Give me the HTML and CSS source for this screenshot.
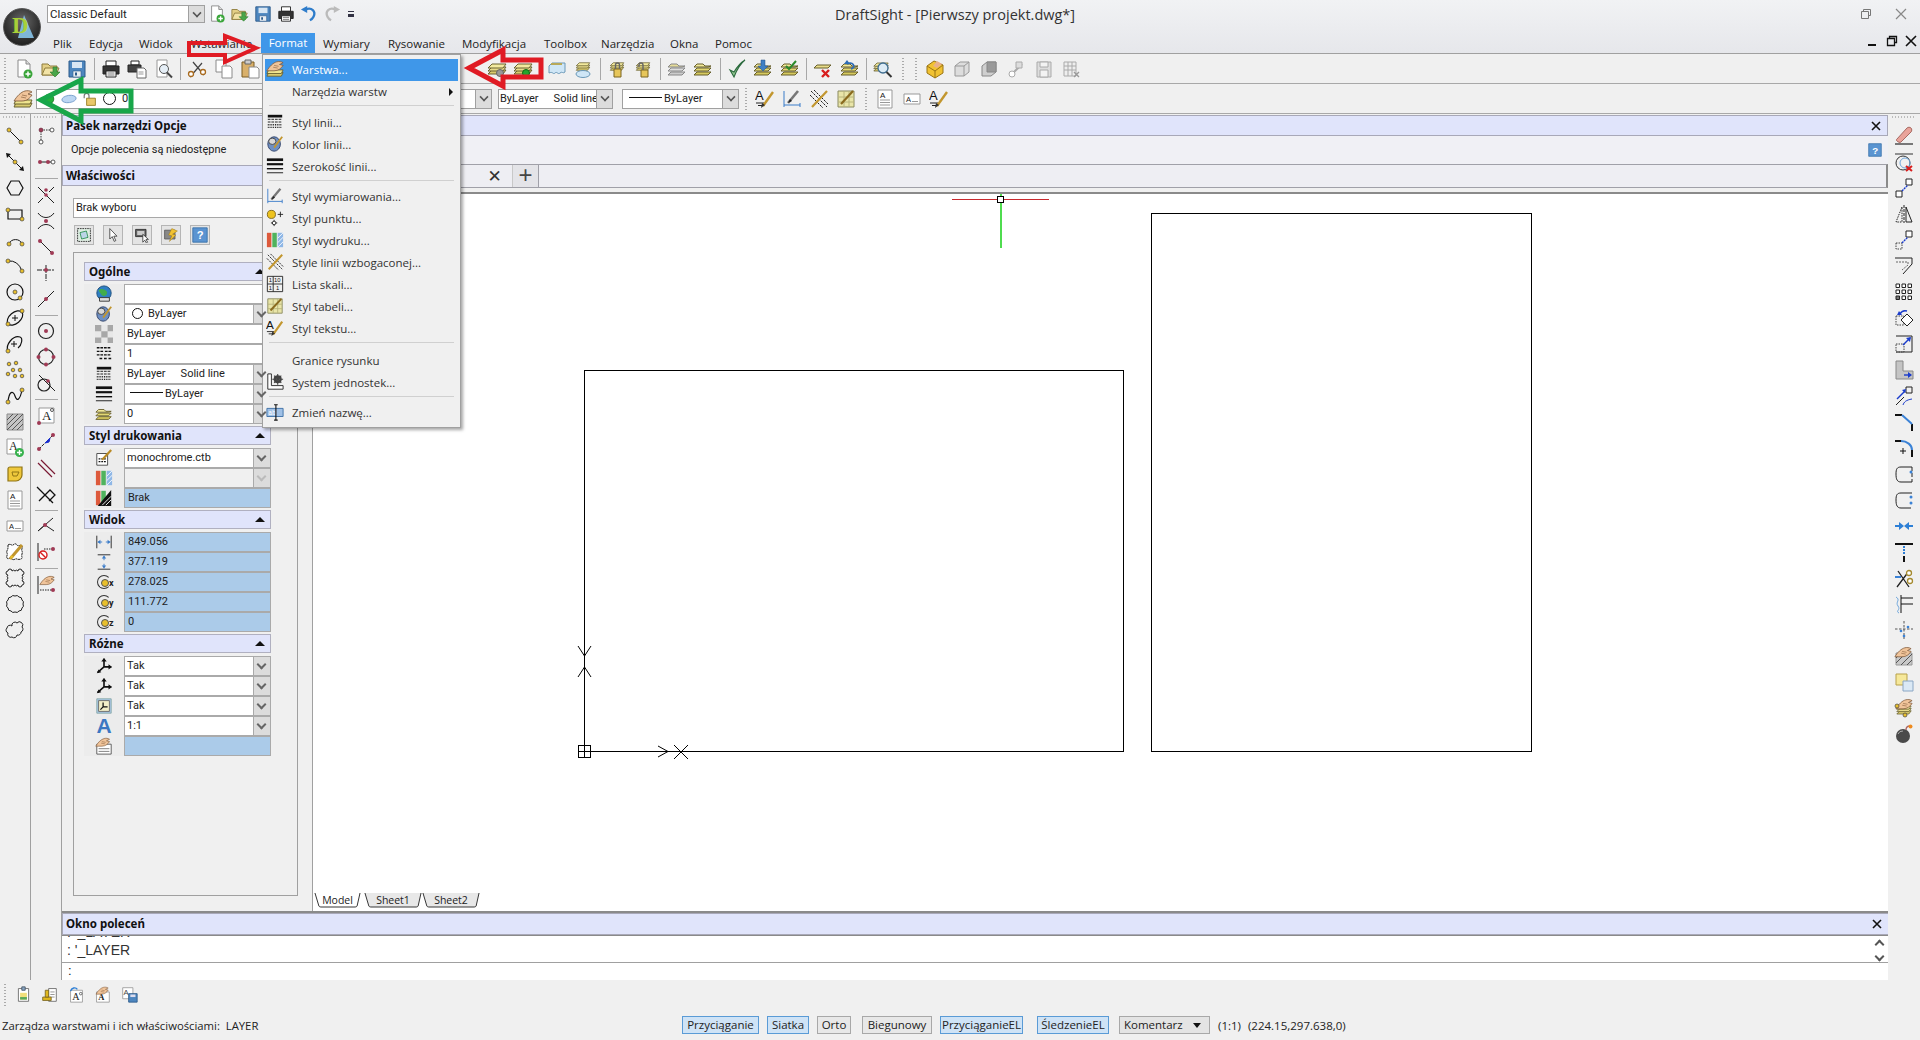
FILE: index.html
```html
<!DOCTYPE html>
<html lang="pl">
<head>
    <meta charset="UTF-8">
    <title>DraftSight - [Pierwszy projekt.dwg*]</title>
    <link rel="stylesheet" href="styles.css">
</head>
<body>
<svg class="defs" width="0" height="0">
    <defs>
        <symbol id="new" viewBox="0 0 20 20"><path d="M4 1h8l4 4v13H4z" fill="#fff" stroke="#8a8a8a"/><path d="M12 1v4h4" fill="#ddd" stroke="#8a8a8a"/><circle cx="14" cy="15" r="4.5" fill="#3aa53a"/><path d="M14 12.5v5M11.5 15h5" stroke="#fff" stroke-width="1.5"/></symbol>
        <symbol id="open" viewBox="0 0 20 20"><path d="M1 5h6l2 2h7v9H1z" fill="#e3cf86" stroke="#8f7d3d"/><path d="M4 9h14l-3 7H1z" fill="#f2e3a6" stroke="#8f7d3d"/><path d="M12 8h4v5h3l-5 5-5-5h3z" fill="#4aa64a" stroke="#2c7a2c" stroke-width=".6"/></symbol>
        <symbol id="save" viewBox="0 0 20 20"><path d="M2 2h16v16H2z" fill="#4d86bf" stroke="#2c5a8a"/><path d="M5 3h10v6H5z" fill="#d8e6f3"/><path d="M6 12h8v6H6z" fill="#e9eef3" stroke="#2c5a8a" stroke-width=".6"/><path d="M8 13.500h2v3H8z" fill="#2c5a8a"/></symbol>
        <symbol id="print" viewBox="0 0 20 20"><path d="M5 2h10v5H5z" fill="#fff" stroke="#222"/><path d="M2 7h16v8H2z" fill="#333" stroke="#222"/><path d="M5 12h10v6H5z" fill="#fff" stroke="#222"/><path d="M6.500 14h7M6.500 16h7" stroke="#777"/></symbol>
        <symbol id="plot" viewBox="0 0 20 20"><path d="M4 2h8v4H4z" fill="#fff" stroke="#222"/><path d="M1 6h13v7H1z" fill="#444" stroke="#222"/><path d="M10 9h7l2 2v8h-9z" fill="#fff" stroke="#666"/><path d="M11.500 13h5M11.500 15h5" stroke="#999"/></symbol>
        <symbol id="preview" viewBox="0 0 20 20"><path d="M3 1h10v17H3z" fill="#fff" stroke="#999"/><circle cx="10" cy="10" r="4.500" fill="#e5eef6" stroke="#555"/><path d="M13 13.500l5 5" stroke="#444" stroke-width="2"/></symbol>
        <symbol id="cut" viewBox="0 0 20 20"><path d="M3 18L15 4M17 16L6 3" stroke="#444" stroke-width="1.200" fill="none"/><circle cx="4" cy="15" r="2.500" fill="#fff" stroke="#a86a1e" stroke-width="1.300"/><circle cx="16" cy="13" r="2.500" fill="#fff" stroke="#a86a1e" stroke-width="1.300"/></symbol>
        <symbol id="copy" viewBox="0 0 20 20"><path d="M2 1h8l2 2v10H2z" fill="#fff" stroke="#8a8a8a"/><path d="M8 7h8l2 2v10H8z" fill="#fff" stroke="#8a8a8a"/></symbol>
        <symbol id="paste" viewBox="0 0 20 20"><path d="M2 3h12v15H2z" fill="#d9b06a" stroke="#7a5c22"/><path d="M5 1h6v4H5z" fill="#ccc" stroke="#666"/><path d="M9 8h8l2 2v9H9z" fill="#fff" stroke="#8a8a8a"/></symbol>
        <symbol id="layers" viewBox="0 0 20 20"><path d="M1 15l4-4h14l-3 4z" fill="#d9cb6e" stroke="#6a6231"/><path d="M1 12l4-4h14l-3 4z" fill="#e8dc8a" stroke="#6a6231"/><path d="M1 9l4-4h14l-3 4z" fill="#f3ea9e" stroke="#6a6231"/></symbol>
        <symbol id="hand" viewBox="0 0 20 20"><path d="M1 12C4 7 8 3 12 2c2-.5 5-.5 7 1l-4 2 4 1c-2 3-5 6-10 6z" fill="#f0c49a" stroke="#7a5433" stroke-width=".8"/><path d="M9 6l5 1M8 8l5 1" stroke="#7a5433" stroke-width=".6"/></symbol>
        <symbol id="layerhand" viewBox="0 0 20 20"><path d="M1 18l2-4h16l-2 4z" fill="#d9cb6e" stroke="#6a6231"/><path d="M1 15l2-4h16l-2 4z" fill="#efe48e" stroke="#6a6231"/><use href="#hand" width="20" height="20"/></symbol>
        <symbol id="laygray" viewBox="0 0 20 20"><use href="#layers"/><circle cx="13" cy="14" r="3.500" fill="#999" stroke="#666"/></symbol>
        <symbol id="laygreen" viewBox="0 0 20 20"><use href="#layers"/><circle cx="13" cy="14" r="3.500" fill="#22a52c" stroke="#0c6a12"/></symbol>
        <symbol id="layice" viewBox="0 0 20 20"><path d="M2 7l3-3h13v9c-2 2-3-1-5 1s-3-2-5 0-2-2-6 0z" fill="#cfe6f6" stroke="#6a98b8"/><path d="M4 5h11" stroke="#b8a95a" stroke-width="2"/></symbol>
        <symbol id="laywater" viewBox="0 0 20 20"><use href="#layers" height="15" width="20"/><ellipse cx="10" cy="15" rx="7" ry="3.500" fill="#cfe6f6" stroke="#6a98b8"/></symbol>
        <symbol id="laylock" viewBox="0 0 20 20"><use href="#layers" height="15" width="20"/><path d="M7 10h7v8H7z" fill="#e7c65a" stroke="#7a6420"/><path d="M8.500 10V6a2 2 0 0 1 4 0v4" fill="none" stroke="#666" stroke-width="1.400"/></symbol>
        <symbol id="layunlock" viewBox="0 0 20 20"><use href="#layers" height="15" width="20"/><path d="M8 11h7v7H8z" fill="#e7c65a" stroke="#7a6420"/><path d="M6 8V6a2 2 0 0 1 4 0v5" fill="none" stroke="#666" stroke-width="1.400"/></symbol>
        <symbol id="layflat" viewBox="0 0 20 20"><path d="M1 16l3-3h14l-3 3z" fill="#ccc" stroke="#888"/><path d="M1 12l3-3h14l-3 3z" fill="#ddd" stroke="#888"/><path d="M1 8l3-3h6l2 2h6l-3 1z" fill="#e6dd9a" stroke="#888"/></symbol>
        <symbol id="layflat2" viewBox="0 0 20 20"><path d="M1 16l3-3h14l-3 3z" fill="#d6c95f" stroke="#665e2a"/><path d="M1 12l3-3h14l-3 3z" fill="#e3d874" stroke="#665e2a"/><path d="M1 8l3-3h6l2 2h6l-3 1z" fill="#f2e99a" stroke="#665e2a"/></symbol>
        <symbol id="check" viewBox="0 0 20 20"><path d="M3 11l4 7C10 10 13 5 18 1c-5 3-8 7-11 12z" fill="#8fc48f" stroke="#2b6a3d" stroke-width="1.100"/></symbol>
        <symbol id="laydown" viewBox="0 0 20 20"><use href="#layflat2"/><path d="M8 1h4v6h3l-5 5-5-5h3z" fill="#3f7fc4" stroke="#204f85" stroke-width=".5"/></symbol>
        <symbol id="laycheck" viewBox="0 0 20 20"><use href="#layflat2"/><path d="M6 7l3 3 7-8" fill="none" stroke="#2a8a2a" stroke-width="2"/></symbol>
        <symbol id="layx" viewBox="0 0 20 20"><path d="M1 9l3-3h14l-3 3z" fill="#e8dc8a" stroke="#665e2a"/><path d="M9 11l7 7M16 11l-7 7" stroke="#d81e1e" stroke-width="2.400"/></symbol>
        <symbol id="layundo" viewBox="0 0 20 20"><use href="#layflat2"/><path d="M7 5a4 3 0 1 1 4 5" fill="none" stroke="#2d6cb5" stroke-width="1.700"/><path d="M4 5h6L7 1z" fill="#2d6cb5"/></symbol>
        <symbol id="laymag" viewBox="0 0 20 20"><use href="#layers" width="16" height="16"/><circle cx="10" cy="9" r="5" fill="#dcebf5" stroke="#3f6d8f" stroke-width="1.300"/><path d="M13.500 13l5 5" stroke="#333" stroke-width="2"/></symbol>
        <symbol id="block" viewBox="0 0 20 20"><path d="M2 7l7-5 9 4v8l-8 5-8-5z" fill="#f1c232" stroke="#9a7414"/><path d="M2 7l8 5 8-6M10 12v7" fill="none" stroke="#9a7414"/><path d="M8 7l4-5 5 3-5 4z" fill="#e9b08a"/></symbol>
        <symbol id="blockg" viewBox="0 0 20 20"><path d="M3 7l5-4h9v10l-5 4H3z" fill="#ddd" stroke="#999"/><path d="M3 7h9v10M12 7l5-4" fill="none" stroke="#999"/></symbol>
        <symbol id="blockd" viewBox="0 0 20 20"><path d="M3 7l5-4h9v10l-5 4H3z" fill="#cfcfcf" stroke="#888"/><path d="M8 3h9v10H8z" fill="#9a9a9a" stroke="#888"/></symbol>
        <symbol id="insedit" viewBox="0 0 20 20"><path d="M5 15L15 5" stroke="#aaa" stroke-width="2"/><circle cx="5" cy="15" r="3" fill="#fff" stroke="#aaa"/><path d="M9 3h6v6H9z" fill="#ddd" stroke="#aaa"/></symbol>
        <symbol id="saveg" viewBox="0 0 20 20"><path d="M3 3h14v15H3z" fill="#ddd" stroke="#aaa"/><path d="M6 3h8v5H6zM6 11h8v7H6z" fill="#f3f3f3" stroke="#aaa"/></symbol>
        <symbol id="tableg" viewBox="0 0 20 20"><path d="M3 3h12v14H3z" fill="#eee" stroke="#aaa"/><path d="M3 7h12M3 11h12M7 3v14M11 3v14" stroke="#aaa"/><path d="M13 13l5 5M18 13l-5 5" stroke="#999" stroke-width="1.400"/></symbol>
        <symbol id="textstyle" viewBox="0 0 20 20"><text x="0" y="11" font-family="Liberation Sans" font-size="13" fill="#111">A</text><path d="M1 14h8M3 16.500h4" stroke="#222"/><path d="M8 17L18 3" stroke="#c2962e" stroke-width="2.400"/><path d="M6 19l1-5 3 2z" fill="#333"/></symbol>
        <symbol id="dimstyle" viewBox="0 0 20 20"><path d="M2 2v16M18 14v4M2 16h16" stroke="#3b7cc9" fill="none"/><path d="M6 14L16 2" stroke="#777" stroke-width="2.600"/><path d="M6 14l2-4 2 2z" fill="#222"/></symbol>
        <symbol id="richline" viewBox="0 0 20 20"><path d="M2 2l16 16M5 1l14 14M1 6l13 13" stroke="#222" fill="none" stroke-width="1" stroke-dasharray="2.500 1"/><path d="M3 18L18 2" stroke="#c2962e" stroke-width="2.200"/></symbol>
        <symbol id="tablestyle" viewBox="0 0 20 20"><path d="M2 2h16v16H2z" fill="#e9e5a8" stroke="#8a8a60"/><path d="M2 8h16M2 13h16M8 2v16M13 2v16" stroke="#b8b47a"/><path d="M5 15L17 2" stroke="#8a6a1e" stroke-width="2.200"/></symbol>
        <symbol id="linestyle" viewBox="0 0 20 20"><path d="M2 2h16v3H2z" fill="#111"/><path d="M2 7h16M2 10h16" stroke="#111" stroke-dasharray="3 1"/><path d="M2 13h16M2 16h16" stroke="#111" stroke-dasharray="1 1" stroke-width="1.500"/></symbol>
        <symbol id="linecolor" viewBox="0 0 20 20"><ellipse cx="9" cy="10" rx="7" ry="8" fill="#6e8fc2" stroke="#2e3f66"/><ellipse cx="7" cy="7" rx="4" ry="3.500" fill="#d8d8d8" stroke="#444"/><path d="M9 14L18 2" stroke="#c2962e" stroke-width="2"/></symbol>
        <symbol id="linewidth" viewBox="0 0 20 20"><path d="M1 3h18" stroke="#111" stroke-width="3"/><path d="M1 8h18" stroke="#111" stroke-width="2.400"/><path d="M1 13h18" stroke="#111" stroke-width="1.600"/><path d="M1 17.500h18" stroke="#111"/></symbol>
        <symbol id="pointstyle" viewBox="0 0 20 20"><circle cx="6" cy="6" r="4.500" fill="#eec31f" stroke="#7a6420"/><path d="M13 6h6M16 3v6" stroke="#222"/><path d="M9 12v7M5.500 15.500h7" stroke="#222"/><circle cx="9" cy="15.500" r="2" fill="#fff" stroke="#222"/></symbol>
        <symbol id="plotstyle" viewBox="0 0 20 20"><path d="M1 2h5v16H1z" fill="#dd5a3c"/><path d="M7 2h5v16H7z" fill="#4fb35e"/><path d="M13 2h6v16h-6z" fill="#8fb7e6"/><path d="M13 8l6-6M13 13l6-6M13 18l6-6" stroke="#fff"/></symbol>
        <symbol id="scale" viewBox="0 0 20 20"><path d="M1.500 1.500h17v17h-17zM1.500 10h17M8 1.500v17" fill="none" stroke="#222"/><text x="3" y="8" font-family="Liberation Sans" font-size="6.500" fill="#111">1</text><text x="9" y="8" font-family="Liberation Sans" font-size="6.500" fill="#111">10</text><text x="3" y="16.500" font-family="Liberation Sans" font-size="6.500" fill="#111">1</text><text x="11" y="16.500" font-family="Liberation Sans" font-size="6.500" fill="#111">1</text></symbol>
        <symbol id="units" viewBox="0 0 20 20"><path d="M2 1v17h17v-4H6V1z" fill="#fff" stroke="#222"/><circle cx="13" cy="7" r="4.500" fill="#444"/><circle cx="13" cy="7" r="1.800" fill="#fff"/><path d="M13 1v12M7 7h12M9 3l8 8M17 3l-8 8" stroke="#444" stroke-width="1.200"/></symbol>
        <symbol id="rename" viewBox="0 0 20 20"><path d="M1 6h18v9H1z" fill="#9fc0e6" stroke="#3b6ea5"/><text x="2.500" y="13.500" font-family="Liberation Mono" font-size="7" fill="#fff">ab</text><path d="M9 2h4M9 19h4M11 2v17" stroke="#111" stroke-width="1.200"/></symbol>
        <symbol id="globe" viewBox="0 0 20 20"><circle cx="10" cy="9" r="8" fill="#2f7fc4" stroke="#194a78"/><path d="M4 6c3-3 6-1 8 0s2 5-1 6-5-3-7-6z" fill="#42ad4a"/><path d="M5 14h11v4H5z" fill="#ddd" stroke="#333"/></symbol>
        <symbol id="checker" viewBox="0 0 20 20"><path d="M0 0h20v20H0z" fill="#e8e8e8"/><path d="M0 0h7v7H0zM14 0h6v7h-6zM7 7h7v7H7zM0 14h7v6H0zM14 14h6v6h-6z" fill="#a8a8a8"/></symbol>
        <symbol id="ltscale" viewBox="0 0 20 20"><path d="M2 3h16M2 7h7m2 0h7M2 11h16M5 15h3m2 0h3m2 0h3" stroke="#111" stroke-width="1.500" stroke-dasharray="3 1"/></symbol>
        <symbol id="cfgpen" viewBox="0 0 20 20"><path d="M2 5h12v13H2z" fill="#fff" stroke="#444"/><path d="M4 11h8M4 14h8" stroke="#111" stroke-width="1.500" stroke-dasharray="2 1"/><path d="M8 12L18 1" stroke="#b98a25" stroke-width="2.400"/></symbol>
        <symbol id="colorg" viewBox="0 0 20 20"><use href="#plotstyle"/></symbol>
        <symbol id="plotbrak" viewBox="0 0 20 20"><path d="M1 2h5v16H1z" fill="#dd5a3c"/><path d="M7 2h5v16H7z" fill="#4fb35e"/><path d="M18 1v18H3z" fill="#111"/><path d="M8 18L18 8M12 18l6-6" stroke="#fff"/></symbol>
        <symbol id="wid" viewBox="0 0 20 20"><path d="M2 3v14M18 3v14" stroke="#222"/><path d="M3 10h5M12 10h5" stroke="#3b7cc9"/><path d="M3 10l3-2.500v5zM17 10l-3-2.500v5z" fill="#3b7cc9"/></symbol>
        <symbol id="hei" viewBox="0 0 20 20"><path d="M3 2h14M3 18h14" stroke="#222"/><path d="M10 3v5M10 12v5" stroke="#3b7cc9"/><path d="M10 3l-2.500 3h5zM10 17l-2.500-3h5z" fill="#3b7cc9"/></symbol>
        <symbol id="axis" viewBox="0 0 20 20"><path d="M10 11V2M10 11h8M10 11l-7 6" stroke="#111" stroke-width="1.800" fill="none"/><path d="M10 1l-3 4h6zM19 11l-4-3v6zM2 18l5-1-3-3z" fill="#111"/></symbol>
        <symbol id="axisb" viewBox="0 0 20 20"><path d="M2 2h16v16H2z" fill="#a9c7e6" stroke="#8aa"/><path d="M4 4h12v12H4z" fill="#f3efc9" stroke="#666"/><path d="M9 11V6M9 11h5M9 11l-3 3" stroke="#111" stroke-width="1.400" fill="none"/></symbol>
        <symbol id="handpage" viewBox="0 0 20 20"><path d="M2 8h16v11H2z" fill="#fff" stroke="#555"/><path d="M4 13h12M4 16h12" stroke="#777"/><use href="#hand" width="17" height="17"/></symbol>
        <symbol id="pickbox" viewBox="0 0 20 20"><path d="M2 2h16v16H2z" fill="#dfeee3" stroke="#111" stroke-dasharray="2 1"/><path d="M5 7l8-2 2 8-8 2z" fill="#bcd5e8" stroke="#1c8a42"/></symbol>
        <symbol id="cursor" viewBox="0 0 20 20"><path d="M6 2v13l3-3 2.500 6 2-1-2.500-5.500h4z" fill="#fff" stroke="#333"/></symbol>
        <symbol id="picksel" viewBox="0 0 20 20"><path d="M2 3h13v9H2z" fill="#666" stroke="#222"/><path d="M4 5h9v5H4z" fill="#ccc"/><path d="M11 9v10l2.500-2.500 2 3.500 1.500-1-2-3.500h3z" fill="#fff" stroke="#333"/></symbol>
        <symbol id="quick" viewBox="0 0 20 20"><path d="M2 4h13v11H2z" fill="#888" stroke="#555"/><path d="M11 2l7 3-6 4 4 1-8 8 3-7-4-1z" fill="#f1c232" stroke="#9a7414" stroke-width=".6"/></symbol>
        <symbol id="help" viewBox="0 0 20 20"><path d="M1 1h18v18H1z" fill="#5b94d1" stroke="#2f6aa5"/><text x="6" y="15.500" font-family="Liberation Sans" font-weight="700" font-size="14" fill="#fff">?</text></symbol>
        <symbol id="undo" viewBox="0 0 20 20"><path d="M6 5c7-3 12 2 9 8-1 2-2 3-4 4" fill="none" stroke="#2f7dcb" stroke-width="2.600"/><path d="M1 5l7-4v8z" fill="#2f7dcb"/></symbol>
        <symbol id="redo" viewBox="0 0 20 20"><path d="M14 5C7 2 2 7 5 13c1 2 2 3 4 4" fill="none" stroke="#bbb" stroke-width="2.600"/><path d="M19 5l-7-4v8z" fill="#bbb"/></symbol>
        <symbol id="mtext" viewBox="0 0 20 20"><path d="M3 1h14v18H3z" fill="#fff" stroke="#999"/><text x="5" y="9" font-family="Liberation Sans" font-size="8" fill="#222">A</text><path d="M5 11h10M5 13.500h10M5 16h10" stroke="#999"/></symbol>
        <symbol id="stext" viewBox="0 0 20 20"><path d="M2 5h16v10H2z" fill="#fff" stroke="#999"/><text x="4" y="12.500" font-family="Liberation Sans" font-size="7.500" fill="#222">A</text><path d="M10 12.500h6" stroke="#999"/></symbol>

        <symbol id="l-line" viewBox="0 0 20 20"><path d="M4 4l12 12" stroke="#111"/><circle cx="4" cy="4" r="2" fill="#e8bf2c" stroke="#444" stroke-width=".7"/><circle cx="16" cy="16" r="2" fill="#e8bf2c" stroke="#444" stroke-width=".7"/></symbol>
        <symbol id="l-ray" viewBox="0 0 20 20"><path d="M2 2l16 16" stroke="#111"/><path d="M1 1l5 1-4 4zM19 19l-5-1 4-4z" fill="#111"/><circle cx="10" cy="10" r="2" fill="#e8bf2c" stroke="#444" stroke-width=".7"/></symbol>
        <symbol id="l-hex" viewBox="0 0 20 20"><path d="M6 3h8l4 7-4 7H6l-4-7z" fill="none" stroke="#111" stroke-width="1.200"/></symbol>
        <symbol id="l-rect" viewBox="0 0 20 20"><path d="M3 6h14v9H3z" fill="none" stroke="#111" stroke-width="1.200"/><circle cx="3" cy="6" r="2" fill="#e8bf2c" stroke="#444" stroke-width=".7"/><circle cx="17" cy="15" r="2" fill="#e8bf2c" stroke="#444" stroke-width=".7"/></symbol>
        <symbol id="l-arc" viewBox="0 0 20 20"><path d="M4 14A7 7 0 0 1 17 14" fill="none" stroke="#111"/><circle cx="4" cy="14" r="2" fill="#e8bf2c" stroke="#444" stroke-width=".7"/><circle cx="17" cy="14" r="2" fill="#e8bf2c" stroke="#444" stroke-width=".7"/></symbol>
        <symbol id="l-arc2" viewBox="0 0 20 20"><path d="M3 5Q13 4 17 15" fill="none" stroke="#111"/><circle cx="3" cy="5" r="2" fill="#e8bf2c" stroke="#444" stroke-width=".7"/><circle cx="17" cy="15" r="2" fill="#e8bf2c" stroke="#444" stroke-width=".7"/></symbol>
        <symbol id="l-circle" viewBox="0 0 20 20"><circle cx="10" cy="10" r="8" fill="none" stroke="#111" stroke-width="1.200"/><circle cx="10" cy="10" r="2" fill="#e8bf2c" stroke="#444" stroke-width=".7"/><circle cx="15" cy="16" r="2" fill="#e8bf2c" stroke="#444" stroke-width=".7"/></symbol>
        <symbol id="l-ell" viewBox="0 0 20 20"><ellipse cx="10" cy="10" rx="9" ry="5.500" transform="rotate(-40 10 10)" fill="none" stroke="#111" stroke-width="1.200"/><path d="M7 10h6M10 7v6" stroke="#111"/><circle cx="17" cy="3" r="2" fill="#e8bf2c" stroke="#444" stroke-width=".7"/><circle cx="3" cy="16" r="2" fill="#e8bf2c" stroke="#444" stroke-width=".7"/></symbol>
        <symbol id="l-ell2" viewBox="0 0 20 20"><path d="M3 17C0 11 8 1 15 3c3 1 2 8-2 11" fill="none" stroke="#111" stroke-width="1.200"/><path d="M6 10h6M9 7v6" stroke="#111"/><circle cx="3" cy="17" r="2" fill="#e8bf2c" stroke="#444" stroke-width=".7"/></symbol>
        <symbol id="l-pts" viewBox="0 0 20 20"><g fill="#e8bf2c" stroke="#444" stroke-width=".7"><circle cx="4" cy="4" r="1.800"/><circle cx="11" cy="3" r="1.800"/><circle cx="8" cy="10" r="1.800"/><circle cx="3" cy="14" r="1.800"/><circle cx="15" cy="10" r="1.800"/><circle cx="10" cy="16" r="1.800"/><circle cx="17" cy="16" r="1.800"/></g></symbol>
        <symbol id="l-spl" viewBox="0 0 20 20"><path d="M3 16C4 5 8 4 10 10s5 4 7-6" fill="none" stroke="#111" stroke-width="1.200"/><circle cx="3" cy="16" r="2" fill="#e8bf2c" stroke="#444" stroke-width=".7"/><circle cx="17" cy="4" r="2" fill="#e8bf2c" stroke="#444" stroke-width=".7"/></symbol>
        <symbol id="l-hatch" viewBox="0 0 20 20"><path d="M2 2h16v16H2z" fill="#c4c4c4" stroke="#8c8c8c"/><path d="M2 8l6-6M2 13l11-11M2 18l16-16M7 18l11-11M12 18l6-6" stroke="#555"/></symbol>
        <symbol id="l-tplus" viewBox="0 0 20 20"><path d="M2 1h15v15H2z" fill="#fff" stroke="#999"/><text x="4" y="12" font-family="Liberation Serif" font-size="12" fill="#222">A</text><circle cx="14.500" cy="14.500" r="4.500" fill="#37b24d"/><path d="M14.500 12v5M12 14.500h5" stroke="#fff" stroke-width="1.400"/></symbol>
        <symbol id="l-region" viewBox="0 0 20 20"><path d="M3 5a2 2 0 0 1 2-2h12v8c0 3-3 6-6 6H3z" fill="#efc83c" stroke="#8f7414" stroke-width="1.200"/><path d="M7 8h7l-2 4H8z" fill="none" stroke="#8f7414"/></symbol>
        <symbol id="l-cpen" viewBox="0 0 20 20"><path d="M3 3c2-2 4 1 5 0s3-2 4 0 4-1 5 1-1 3 0 5-1 4 0 6-3 3-5 2-3 2-5 0-4 1-5-1 1-3 0-5 1-3 1-5z" fill="#fff" stroke="#222" stroke-dasharray="2 .5"/><path d="M5 17L17 3" stroke="#c2962e" stroke-width="3"/><path d="M5 17l1-4 3 2z" fill="#e8bf2c"/></symbol>
        <symbol id="l-crect" viewBox="0 0 20 20"><path d="M3 3a2 2 0 0 1 4 0 2 2 0 0 1 3 0 2 2 0 0 1 3 0 2 2 0 0 1 4 0 2 2 0 0 1 0 4 2 2 0 0 1 0 3 2 2 0 0 1 0 3 2 2 0 0 1 0 4 2 2 0 0 1-4 0 2 2 0 0 1-3 0 2 2 0 0 1-3 0 2 2 0 0 1-4 0 2 2 0 0 1 0-4 2 2 0 0 1 0-3 2 2 0 0 1 0-3 2 2 0 0 1 0-4z" fill="none" stroke="#222"/></symbol>
        <symbol id="l-ccirc" viewBox="0 0 20 20"><path d="M6 3a3 3 0 0 1 4-1 3 3 0 0 1 4 1 3 3 0 0 1 3 3 3 3 0 0 1 1 4 3 3 0 0 1-1 4 3 3 0 0 1-3 3 3 3 0 0 1-4 1 3 3 0 0 1-4-1 3 3 0 0 1-3-3 3 3 0 0 1-1-4 3 3 0 0 1 1-4 3 3 0 0 1 3-3z" fill="none" stroke="#222"/></symbol>
        <symbol id="l-cblob" viewBox="0 0 20 20"><path d="M7 6a3 3 0 0 1 5-3 3 3 0 0 1 5 4 3 3 0 0 1-1 5 3 3 0 0 1-4 3 3 3 0 0 1-5 2 3 3 0 0 1-4-4 3 3 0 0 1-1-5 3 3 0 0 1 5-2z" fill="none" stroke="#222"/></symbol>

        <symbol id="d-chain" viewBox="0 0 20 20"><path d="M5 4h10M5 5v9" stroke="#333" stroke-dasharray="1.500 1"/><circle cx="5" cy="4" r="2" fill="#a03a55" stroke="#501828" stroke-width=".5"/><circle cx="16" cy="4" r="2" fill="#fff" stroke="#333" stroke-width=".8"/><circle cx="5" cy="16" r="2" fill="#fff" stroke="#333" stroke-width=".8"/></symbol>
        <symbol id="d-base" viewBox="0 0 20 20"><path d="M4 10h12" stroke="#222"/><circle cx="4" cy="10" r="2" fill="#a03a55"/><circle cx="12" cy="10" r="2" fill="#a03a55"/><circle cx="17" cy="10" r="2" fill="#fff" stroke="#333" stroke-width=".8"/></symbol>
        <symbol id="d-trim" viewBox="0 0 20 20"><path d="M2 2l16 16M2 18l5-5M13 7l5-5" stroke="#222"/><circle cx="10" cy="5" r="1.800" fill="#a03a55"/><circle cx="10" cy="10" r="1.800" fill="#a03a55"/></symbol>
        <symbol id="d-cross" viewBox="0 0 20 20"><path d="M2 2C6 8 14 8 18 2M2 18C6 12 14 12 18 18" fill="none" stroke="#222"/><circle cx="10" cy="10" r="2" fill="#a03a55"/></symbol>
        <symbol id="d-seg" viewBox="0 0 20 20"><path d="M3 3l14 14" stroke="#222"/><circle cx="4" cy="4" r="2" fill="#a03a55"/><circle cx="16" cy="16" r="2" fill="#a03a55"/></symbol>
        <symbol id="d-t" viewBox="0 0 20 20"><path d="M1 7h18M10 2v16" stroke="#222" stroke-dasharray="5 1 2 1"/><circle cx="10" cy="7" r="2" fill="#a03a55"/></symbol>
        <symbol id="d-diag" viewBox="0 0 20 20"><path d="M2 18L18 2" stroke="#222"/><circle cx="10" cy="10" r="2" fill="#a03a55"/></symbol>
        <symbol id="d-ring" viewBox="0 0 20 20"><circle cx="10" cy="10" r="7.500" fill="none" stroke="#222" stroke-width="1.200"/><circle cx="10" cy="10" r="2" fill="#a03a55"/></symbol>
        <symbol id="d-quad" viewBox="0 0 20 20"><circle cx="10" cy="10" r="7.500" fill="none" stroke="#222" stroke-width="1.200"/><g fill="#a03a55"><circle cx="10" cy="2.500" r="2"/><circle cx="10" cy="17.500" r="2"/><circle cx="2.500" cy="10" r="2"/><circle cx="17.500" cy="10" r="2"/></g></symbol>
        <symbol id="d-tan" viewBox="0 0 20 20"><circle cx="8" cy="12" r="6" fill="none" stroke="#222" stroke-width="1.200"/><path d="M3 2l16 16" stroke="#222"/><circle cx="12" cy="8" r="1.800" fill="#a03a55"/></symbol>
        <symbol id="d-atext" viewBox="0 0 20 20"><path d="M3 2h15v15H3z" fill="#fff" stroke="#999"/><text x="6" y="14" font-family="Liberation Serif" font-size="13" fill="#222">A</text><circle cx="3" cy="17" r="2" fill="#a03a55"/><circle cx="16" cy="4" r="1.500" fill="#fff" stroke="#555"/></symbol>
        <symbol id="d-blue" viewBox="0 0 20 20"><path d="M3 17L17 3" stroke="#222" stroke-dasharray="3 1"/><path d="M9 11l5-5-1 4z" fill="#1a2ecc" stroke="#1a2ecc"/><circle cx="3" cy="17" r="2" fill="#a03a55"/><circle cx="17" cy="3" r="2" fill="#a03a55"/></symbol>
        <symbol id="d-par" viewBox="0 0 20 20"><path d="M2 5l14 14M5 2l14 14" stroke="#7a1a34" stroke-width="1.200"/></symbol>
        <symbol id="d-perp" viewBox="0 0 20 20"><path d="M1 3l16 16M3 17L14 6l5 5-6 6" fill="none" stroke="#111" stroke-width="1.300"/></symbol>
        <symbol id="d-ang" viewBox="0 0 20 20"><path d="M2 15L17 2M9 9l9 6M2 15l7-6" fill="none" stroke="#222"/><circle cx="9" cy="9" r="2" fill="#a03a55"/></symbol>
        <symbol id="d-no" viewBox="0 0 20 20"><path d="M2 1v18" stroke="#222"/><path d="M8 7h8" stroke="#222" stroke-dasharray="1.500 1"/><circle cx="17" cy="7" r="2" fill="#a03a55"/><circle cx="7" cy="13" r="4" fill="#fff" stroke="#d81e1e" stroke-width="1.400"/><path d="M4 10l6 6" stroke="#d81e1e" stroke-width="1.400"/></symbol>
        <symbol id="d-hand" viewBox="0 0 20 20"><path d="M2 1v18" stroke="#222"/><path d="M4 15h12" stroke="#222" stroke-dasharray="1.500 1"/><circle cx="17" cy="15" r="2" fill="#a03a55"/><use href="#hand" x="3" width="16" height="16"/></symbol>

        <symbol id="r-erase" viewBox="0 0 20 20"><path d="M3 13L13 2c1-1 3-1 4 0s1 3 0 4L7 16c-1 1-3 0-4-1s-1-1 0-2z" fill="#e9a39a" stroke="#a86a62"/><path d="M1 18h18" stroke="#444" stroke-width="1.400"/></symbol>
        <symbol id="r-cx" viewBox="0 0 20 20"><path d="M1 2h18" stroke="#333"/><circle cx="9" cy="11" r="7" fill="none" stroke="#333"/><circle cx="11" cy="11" r="5" fill="none" stroke="#6fa6dc"/><path d="M12 14l6 5M18 14l-6 5" stroke="#d81e1e" stroke-width="2"/></symbol>
        <symbol id="r-copy" viewBox="0 0 20 20"><path d="M2 13h6v6H2zM12 1h6v6h-6z" fill="#fff" stroke="#222"/><path d="M8 13l6-6" stroke="#1a3ccc" stroke-width="1.400" stroke-dasharray="2 .8"/></symbol>
        <symbol id="r-mirror" viewBox="0 0 20 20"><path d="M10 1v18" stroke="#222" stroke-dasharray="3 1"/><path d="M8 3L2 18h6z" fill="none" stroke="#222" stroke-dasharray="1.500 1"/><path d="M12 3l6 15h-6z" fill="none" stroke="#222"/></symbol>
        <symbol id="r-move" viewBox="0 0 20 20"><path d="M2 13h6v6H2z" fill="none" stroke="#444" stroke-dasharray="1.500 1"/><path d="M12 1h6v6h-6z" fill="#fff" stroke="#222"/><path d="M8 13l6-6" stroke="#1a3ccc" stroke-width="1.400" stroke-dasharray="2 .8"/></symbol>
        <symbol id="r-offset" viewBox="0 0 20 20"><path d="M1 2h17v6L9 18" fill="none" stroke="#222"/><path d="M2 6h12v3L8 14" fill="none" stroke="#666" stroke-dasharray="2 1"/></symbol>
        <symbol id="r-array" viewBox="0 0 20 20"><path d="M2 2h3.500v3.500H2zM8 2h3.500v3.500H8zM14 2h3.500v3.500H14zM2 8h3.500v3.500H2zM8 8h3.500v3.500H8zM14 8h3.500v3.500H14zM8 14h3.500v3.500H8zM14 14h3.500v3.500H14z" fill="#fff" stroke="#222"/><path d="M2 14h3.500v3.500H2z" fill="#777" stroke="#222"/></symbol>
        <symbol id="r-rotate" viewBox="0 0 20 20"><path d="M2 8h8v9H2z" fill="none" stroke="#444" stroke-dasharray="1.500 1"/><path d="M13 6l6 6-6 6-6-6z" fill="#fff" stroke="#222"/><path d="M6 6a6 6 0 0 1 7-3" fill="none" stroke="#1a3ccc" stroke-width="1.400"/><path d="M5 3l3 4-5 0z" fill="#1a3ccc"/></symbol>
        <symbol id="r-scale" viewBox="0 0 20 20"><path d="M2 2h16v16H2" fill="none" stroke="#222"/><path d="M2 10h8v8H2z" fill="none" stroke="#444" stroke-dasharray="1.500 1"/><path d="M9 11l7-7" stroke="#1a3ccc" stroke-width="1.400"/><path d="M17 3l-5 1 4 4z" fill="#1a3ccc"/></symbol>
        <symbol id="r-stretch" viewBox="0 0 20 20"><path d="M2 1h7v10h10v8H2z" fill="#c4c4c4" stroke="#888"/><path d="M10 15h7" stroke="#1a3ccc" stroke-width="1.400"/><path d="M18 15l-4-3v6z" fill="#1a3ccc"/></symbol>
        <symbol id="r-len" viewBox="0 0 20 20"><path d="M12 1h6v6h-6zM2 19l8-8" fill="none" stroke="#222"/><path d="M3 13l8-8" stroke="#1a3ccc" stroke-width="1.400"/><path d="M12 3l-4 1 3 3z" fill="#1a3ccc"/><path d="M9 19c1-3 3-5 9-6" fill="none" stroke="#1a3ccc"/></symbol>
        <symbol id="r-chamfer" viewBox="0 0 20 20"><path d="M1 3h7M18 12v7" stroke="#111" stroke-width="2"/><path d="M8 3l10 9" stroke="#3b82d6" stroke-width="2"/></symbol>
        <symbol id="r-fillet" viewBox="0 0 20 20"><path d="M1 3h6M18 12v7" stroke="#111" stroke-width="2"/><path d="M7 3c6 0 11 4 11 9" fill="none" stroke="#3b82d6" stroke-width="2"/><path d="M6 13h6M9 10v6" stroke="#111"/></symbol>
        <symbol id="r-shape1" viewBox="0 0 20 20"><path d="M18 3H7C3 3 2 5 2 10s1 8 5 8h11" fill="none" stroke="#222"/><path d="M18 3v15" stroke="#222" stroke-dasharray="4 2"/><circle cx="17" cy="8" r="1.500" fill="#3b82d6"/></symbol>
        <symbol id="r-shape2" viewBox="0 0 20 20"><path d="M18 3H7C3 3 2 5 2 10s1 8 5 8h10" fill="none" stroke="#222"/><circle cx="17" cy="7" r="1.500" fill="#3b82d6"/><circle cx="17" cy="13" r="1.500" fill="#3b82d6"/></symbol>
        <symbol id="r-join" viewBox="0 0 20 20"><path d="M1 10h6M13 10h6" stroke="#2d7fd6" stroke-width="2"/><path d="M10 10L5 6v8zM10 10l5-4v8z" fill="#2d7fd6"/></symbol>
        <symbol id="r-break" viewBox="0 0 20 20"><path d="M1 2h18" stroke="#111" stroke-width="2"/><path d="M10 4v9" stroke="#2d7fd6" stroke-width="2" stroke-dasharray="2 1"/><path d="M10 14v6" stroke="#111" stroke-width="2"/></symbol>
        <symbol id="r-trim" viewBox="0 0 20 20"><path d="M3 19L15 3M15 19L4 3" stroke="#222" stroke-width="1.300"/><path d="M1 9h6" stroke="#3b82d6" stroke-width="2"/><circle cx="15" cy="5" r="2.500" fill="#fff" stroke="#a58a2e" stroke-width="1.300"/><circle cx="16" cy="13" r="2.500" fill="#fff" stroke="#a58a2e" stroke-width="1.300"/></symbol>
        <symbol id="r-ext" viewBox="0 0 20 20"><path d="M7 1v18M7 4h12M7 10h12" stroke="#111"/><path d="M2 3c5 3-1 5 2 9s-3 5 1 7" fill="none" stroke="#6fa6dc"/></symbol>
        <symbol id="r-dotcross" viewBox="0 0 20 20"><path d="M1 9h18M10 1v18" stroke="#555" stroke-dasharray="2.500 1.500"/><g fill="#3b82d6"><circle cx="14" cy="7" r="1.300"/><circle cx="7" cy="11" r="1.300"/><circle cx="10" cy="16" r="1.300"/></g></symbol>
        <symbol id="r-handh" viewBox="0 0 20 20"><path d="M2 7h16v12H2z" fill="#c9c9c9" stroke="#999"/><path d="M2 12l5-5M2 17l10-10M7 19l11-11M13 19l5-5" stroke="#555"/><use href="#hand" width="18" height="18"/></symbol>
        <symbol id="r-order" viewBox="0 0 20 20"><path d="M2 2h11v11H2z" fill="#f6e89a" stroke="#b8a14a"/><path d="M9 9h10v10H9z" fill="#dbe9f5" stroke="#8aa6c4"/></symbol>
        <symbol id="r-hands" viewBox="0 0 20 20"><use href="#layers" y="4" height="16" width="20"/><use href="#hand" width="20" height="18"/><circle cx="3" cy="8" r="2" fill="#e8bf2c" stroke="#444" stroke-width=".7"/><circle cx="11" cy="17" r="2" fill="#e8bf2c" stroke="#444" stroke-width=".7"/></symbol>
        <symbol id="r-bomb" viewBox="0 0 20 20"><circle cx="9" cy="12" r="7" fill="#4a4a4a"/><path d="M4 10a5 5 0 0 1 5-3" stroke="#aaa" fill="none"/><path d="M12 6c0-3 2-4 4-4" stroke="#a66" fill="none" stroke-width="1.400"/><circle cx="16.500" cy="2.500" r="2" fill="#ee8a1e"/></symbol>
        <symbol id="b-clip" viewBox="0 0 20 20"><path d="M4 3h12v15H4z" fill="#fff" stroke="#666"/><path d="M6 8h8v8H6z" fill="#f2df7a"/><path d="M6 13h8v3H6z" fill="#5aa85a"/><path d="M8 1h4v4H8z" fill="#8aa6c4" stroke="#456"/></symbol>
        <symbol id="b-stamp" viewBox="0 0 20 20"><path d="M9 3h9v15H9z" fill="#fff" stroke="#666"/><path d="M11 7h5M11 10h5M11 13h5" stroke="#888"/><path d="M2 13h10v4H2z" fill="#e0b81e" stroke="#7a6420"/><path d="M5 5h4v8H5z" fill="#e0b81e" stroke="#7a6420"/></symbol>
        <symbol id="b-arrow" viewBox="0 0 20 20"><path d="M3 5h14v14H3z" fill="#fff" stroke="#999"/><text x="5" y="16" font-family="Liberation Serif" font-size="12" fill="#222">A</text><path d="M3 6c1-4 6-5 8-2" fill="none" stroke="#2d7fd6" stroke-width="1.600"/><circle cx="15" cy="9" r="1.500" fill="#fff" stroke="#555"/></symbol>
        <symbol id="b-hand" viewBox="0 0 20 20"><path d="M3 7h15v12H3z" fill="#fff" stroke="#999"/><text x="5" y="17" font-family="Liberation Serif" font-weight="700" font-size="10" fill="#222">A</text><use href="#hand" width="19" height="16"/></symbol>
        <symbol id="b-save" viewBox="0 0 20 20"><path d="M2 2h12v13H2z" fill="#fff" stroke="#999"/><text x="3" y="11" font-family="Liberation Sans" font-size="9" fill="#444">A</text><path d="M9 9h10v10H9z" fill="#4d86bf" stroke="#2c5a8a"/><path d="M11 10h6v3h-6z" fill="#dde"/></symbol>

        <symbol id="p-bulb" viewBox="0 0 20 20"><circle cx="10" cy="10" r="6" fill="#25b13a" stroke="#137020"/></symbol>
        <symbol id="p-sun" viewBox="0 0 20 20"><ellipse cx="10" cy="10" rx="9" ry="4.500" transform="rotate(-8 10 10)" fill="#bcd6f2" stroke="#6a96c6"/></symbol>
        <symbol id="p-lock" viewBox="0 0 20 20"><path d="M7 9h11v9H7z" fill="#e9c86a" stroke="#8f7414"/><path d="M4 9V6a3 3 0 0 1 6 0v3" fill="none" stroke="#777" stroke-width="1.500"/></symbol>
    </defs>
</svg>

<header class="titlebar">
    <div class="logo">
        <svg class="logo-cone" viewBox="0 0 38 38"><path d="M21 7l10 23H15z" fill="#7fb6d8"/></svg>
        <span class="logo-d">D</span>
    </div>
    <div class="title-main">
        <div class="title-row">
            <div class="combo style-combo"><span class="combo-val">Classic Default</span><span class="drop"></span></div>
            <svg class="qa"><use href="#new"/></svg>
            <svg class="qa"><use href="#open"/></svg>
            <svg class="qa"><use href="#save"/></svg>
            <svg class="qa"><use href="#print"/></svg>
            <svg class="qa"><use href="#undo"/></svg>
            <svg class="qa"><use href="#redo"/></svg>
            <span class="qa-more"></span>
            <div class="app-title">DraftSight - [Pierwszy projekt.dwg*]</div>
            <div class="win-btns">
                <svg class="win-ic" viewBox="0 0 12 12"><path d="M3.500 3.500v-2h7v6h-2M1.500 3.500h7v7h-7z" fill="none" stroke="#777"/></svg>
                <svg class="win-ic win-x" viewBox="0 0 12 12"><path d="M1 1l10 10M11 1L1 11" stroke="#888" stroke-width="1.200"/></svg>
            </div>
        </div>
        <div class="menu-row">
            <nav class="menubar">
                <span class="mb mb-plik">Plik</span>
                <span class="mb mb-edycja">Edycja</span>
                <span class="mb mb-widok">Widok</span>
                <span class="mb mb-wst">Wstawianie</span>
                <span class="mb mb-format">Format</span>
                <span class="mb mb-wym">Wymiary</span>
                <span class="mb mb-rys">Rysowanie</span>
                <span class="mb mb-mod">Modyfikacja</span>
                <span class="mb mb-tool">Toolbox</span>
                <span class="mb mb-nar">Narzędzia</span>
                <span class="mb mb-okna">Okna</span>
                <span class="mb">Pomoc</span>
            </nav>
            <div class="win-btns win-inner">
                <svg class="win-ic" viewBox="0 0 12 12"><path d="M1 10h8" stroke="#111" stroke-width="2"/></svg>
                <svg class="win-ic" viewBox="0 0 12 12"><path d="M3.500 3.500v-2h7v6h-2M1.500 3.500h7v7h-7z" fill="none" stroke="#111" stroke-width="1.300"/></svg>
                <svg class="win-ic" viewBox="0 0 12 12"><path d="M1 1l10 10M11 1L1 11" stroke="#111" stroke-width="1.600"/></svg>
            </div>
        </div>
    </div>
</header>

<div class="toolbar tb1">
    <span class="grip"></span>
    <span class="ti"><svg><use href="#new"/></svg></span>
    <span class="ti"><svg><use href="#open"/></svg></span>
    <span class="ti"><svg><use href="#save"/></svg></span>
    <span class="sep"></span>
    <span class="ti"><svg><use href="#print"/></svg></span>
    <span class="ti"><svg><use href="#plot"/></svg></span>
    <span class="ti"><svg><use href="#preview"/></svg></span>
    <span class="sep"></span>
    <span class="ti"><svg><use href="#cut"/></svg></span>
    <span class="ti"><svg><use href="#copy"/></svg></span>
    <span class="ti"><svg><use href="#paste"/></svg></span>
    <span class="under-menu"></span>
    <span class="ti"><svg><use href="#laygray"/></svg></span>
    <span class="ti"><svg><use href="#laygreen"/></svg></span>
    <span class="gap"></span>
    <span class="ti"><svg><use href="#layice"/></svg></span>
    <span class="ti"><svg><use href="#laywater"/></svg></span>
    <span class="sep"></span>
    <span class="ti"><svg><use href="#laylock"/></svg></span>
    <span class="ti"><svg><use href="#layunlock"/></svg></span>
    <span class="sep"></span>
    <span class="ti"><svg><use href="#layflat"/></svg></span>
    <span class="ti"><svg><use href="#layflat2"/></svg></span>
    <span class="sep"></span>
    <span class="ti"><svg><use href="#check"/></svg></span>
    <span class="ti"><svg><use href="#laydown"/></svg></span>
    <span class="ti"><svg><use href="#laycheck"/></svg></span>
    <span class="sep"></span>
    <span class="ti"><svg><use href="#layx"/></svg></span>
    <span class="ti"><svg><use href="#layundo"/></svg></span>
    <span class="sep"></span>
    <span class="ti"><svg><use href="#laymag"/></svg></span>
    <span class="grip grip-mid"></span>
    <span class="grip grip-mid2"></span>
    <span class="ti ti-wide"><svg><use href="#block"/></svg></span>
    <span class="ti ti-wide"><svg><use href="#blockg"/></svg></span>
    <span class="ti ti-wide"><svg><use href="#blockd"/></svg></span>
    <span class="ti ti-wide"><svg><use href="#insedit"/></svg></span>
    <span class="ti ti-wide"><svg><use href="#saveg"/></svg></span>
    <span class="ti ti-wide"><svg><use href="#tableg"/></svg></span>
</div>

<div class="toolbar tb2">
    <span class="grip"></span>
    <span class="ti"><svg><use href="#layerhand"/></svg></span>
    <div class="combo layer-combo">
        <span class="combo-val layer-val">
            <svg class="lay-ic"><use href="#p-bulb"/></svg>
            <svg class="lay-ic"><use href="#p-sun"/></svg>
            <svg class="lay-ic"><use href="#p-lock"/></svg>
            <span class="ring"></span>
            <span>0</span>
        </span>
        <span class="drop"></span>
    </div>
    <div class="combo type-combo"><span class="combo-val">ByLayer<span class="pad-solid">Solid line</span></span><span class="drop"></span></div>
    <div class="combo width-combo"><span class="combo-val"><span class="dash"></span>ByLayer</span><span class="drop"></span></div>
    <span class="grip grip-after"></span>
    <span class="ti"><svg><use href="#textstyle"/></svg></span>
    <span class="ti"><svg><use href="#dimstyle"/></svg></span>
    <span class="ti"><svg><use href="#richline"/></svg></span>
    <span class="ti"><svg><use href="#tablestyle"/></svg></span>
    <span class="grip grip-after2"></span>
    <span class="ti"><svg><use href="#mtext"/></svg></span>
    <span class="ti"><svg><use href="#stext"/></svg></span>
    <span class="ti"><svg><use href="#textstyle"/></svg></span>
</div>

<div class="workspace">
    <aside class="side side-a">
        <span class="grip-h"></span>
        <span class="si"><svg><use href="#l-line"/></svg></span>
        <span class="si"><svg><use href="#l-ray"/></svg></span>
        <span class="si"><svg><use href="#l-hex"/></svg></span>
        <span class="si"><svg><use href="#l-rect"/></svg></span>
        <span class="si"><svg><use href="#l-arc"/></svg></span>
        <span class="si"><svg><use href="#l-arc2"/></svg></span>
        <span class="si"><svg><use href="#l-circle"/></svg></span>
        <span class="si"><svg><use href="#l-ell"/></svg></span>
        <span class="si"><svg><use href="#l-ell2"/></svg></span>
        <span class="si"><svg><use href="#l-pts"/></svg></span>
        <span class="si"><svg><use href="#l-spl"/></svg></span>
        <span class="si"><svg><use href="#l-hatch"/></svg></span>
        <span class="si"><svg><use href="#l-tplus"/></svg></span>
        <span class="si"><svg><use href="#l-region"/></svg></span>
        <span class="si"><svg><use href="#mtext"/></svg></span>
        <span class="si"><svg><use href="#stext"/></svg></span>
        <span class="si"><svg><use href="#l-cpen"/></svg></span>
        <span class="si"><svg><use href="#l-crect"/></svg></span>
        <span class="si"><svg><use href="#l-ccirc"/></svg></span>
        <span class="si"><svg><use href="#l-cblob"/></svg></span>
    </aside>
    <aside class="side side-b">
        <span class="grip-h"></span>
        <span class="si"><svg><use href="#d-chain"/></svg></span>
        <span class="si"><svg><use href="#d-base"/></svg></span>
        <span class="hr"></span>
        <span class="si"><svg><use href="#d-trim"/></svg></span>
        <span class="si"><svg><use href="#d-cross"/></svg></span>
        <span class="si"><svg><use href="#d-seg"/></svg></span>
        <span class="si"><svg><use href="#d-t"/></svg></span>
        <span class="si"><svg><use href="#d-diag"/></svg></span>
        <span class="hr"></span>
        <span class="si"><svg><use href="#d-ring"/></svg></span>
        <span class="si"><svg><use href="#d-quad"/></svg></span>
        <span class="si"><svg><use href="#d-tan"/></svg></span>
        <span class="hr"></span>
        <span class="si"><svg><use href="#d-atext"/></svg></span>
        <span class="si"><svg><use href="#d-blue"/></svg></span>
        <span class="si"><svg><use href="#d-par"/></svg></span>
        <span class="si"><svg><use href="#d-perp"/></svg></span>
        <span class="hr"></span>
        <span class="si"><svg><use href="#d-ang"/></svg></span>
        <span class="si"><svg><use href="#d-no"/></svg></span>
        <span class="hr"></span>
        <span class="si"><svg><use href="#d-hand"/></svg></span>
    </aside>

    <div class="center">
        <div class="upper">
            <section class="panel">
                <h3 class="dock-head">Pasek narzędzi Opcje</h3>
                <p class="opt-msg">Opcje polecenia są niedostępne</p>
                <h3 class="dock-head">Właściwości</h3>
                <div class="sel-combo"><span>Brak wyboru</span></div>
                <div class="sel-btns">
                    <span class="btn-ic"><svg><use href="#pickbox"/></svg></span>
                    <span class="btn-ic"><svg><use href="#cursor"/></svg></span>
                    <span class="btn-ic"><svg><use href="#picksel"/></svg></span>
                    <span class="btn-ic"><svg><use href="#quick"/></svg></span>
                    <span class="btn-ic"><svg><use href="#help"/></svg></span>
                </div>
                <div class="prop-box">
                    <div class="sec-head">Ogólne</div>
                    <div class="prop"><svg><use href="#globe"/></svg><div class="field"></div></div>
                    <div class="prop"><svg><use href="#linecolor"/></svg><div class="field drop-f"><span class="ring small"></span>ByLayer</div></div>
                    <div class="prop"><svg><use href="#checker"/></svg><div class="field">ByLayer</div></div>
                    <div class="prop"><svg><use href="#ltscale"/></svg><div class="field">1</div></div>
                    <div class="prop"><svg><use href="#linestyle"/></svg><div class="field drop-f">ByLayer<span class="pad-solid">Solid line</span></div></div>
                    <div class="prop"><svg><use href="#linewidth"/></svg><div class="field drop-f"><span class="dash"></span>ByLayer</div></div>
                    <div class="prop"><svg><use href="#layflat2"/></svg><div class="field drop-f">0</div></div>

                    <div class="sec-head">Styl drukowania</div>
                    <div class="prop"><svg><use href="#cfgpen"/></svg><div class="field drop-f">monochrome.ctb</div></div>
                    <div class="prop"><svg><use href="#colorg"/></svg><div class="field drop-f off"></div></div>
                    <div class="prop"><svg><use href="#plotbrak"/></svg><div class="field ro">Brak</div></div>

                    <div class="sec-head">Widok</div>
                    <div class="prop"><svg><use href="#wid"/></svg><div class="field ro">849.056</div></div>
                    <div class="prop"><svg><use href="#hei"/></svg><div class="field ro">377.119</div></div>
                    <div class="prop"><span class="ctr">x</span><div class="field ro">278.025</div></div>
                    <div class="prop"><span class="ctr">y</span><div class="field ro">111.772</div></div>
                    <div class="prop"><span class="ctr">z</span><div class="field ro">0</div></div>

                    <div class="sec-head">Różne</div>
                    <div class="prop"><svg><use href="#axis"/></svg><div class="field drop-f">Tak</div></div>
                    <div class="prop"><svg><use href="#axis"/></svg><div class="field drop-f">Tak</div></div>
                    <div class="prop"><svg><use href="#axisb"/></svg><div class="field drop-f">Tak</div></div>
                    <div class="prop"><span class="big-a">A</span><div class="field drop-f">1:1</div></div>
                    <div class="prop"><svg><use href="#handpage"/></svg><div class="field ro"></div></div>
                </div>
            </section>

            <section class="doc">
                <div class="dock-head doc-head"><svg class="close-x" viewBox="0 0 10 10"><path d="M1 1l8 8M9 1L1 9" stroke="#111" stroke-width="1.600"/></svg></div>
                <div class="doc-help"><svg><use href="#help"/></svg></div>
                <div class="doc-tabs">
                    <span class="tab-x">✕</span>
                    <span class="tab-plus">+</span>
                </div>
                <div class="canvas">
                    <svg class="drawing" width="1576" height="696" shape-rendering="crispEdges">
                        <g transform="translate(-313 -194)" fill="none" stroke="#000">
                            <path d="M584.500 370.500h539v381h-539z"/>
                            <path d="M1151.500 213.500h380v538h-380z"/>
                            <path d="M578.500 745.500h12v12h-12zM584.500 745.500v12M578.500 751.500h12"/>
                            <path d="M658 746l10 5.500-10 5.500M674 745l14 14M688 745l-14 14M578 677l6.500-10 6.500 10M578 646l6.500 10 6.500-10" shape-rendering="auto"/>
                            <path d="M952 199.500h97" stroke="#c8282c"/>
                            <path d="M1000.500 194v54" stroke="#4fdc4f" stroke-width="2"/>
                            <path d="M997.500 196.500h6v6h-6z" fill="#fff"/>
                        </g>
                    </svg>
                    <div class="sheet-tabs">
                        <span class="sheet sheet-model"><svg class="sheet-shape" viewBox="0 0 48 15" preserveAspectRatio="none"><path d="M1 0l4 13q.5 1 2 1h35q1.500 0 2-1l3-13" fill="#fff" stroke="#333"/></svg><span class="sheet-name">Model</span></span>
                        <span class="sheet"><svg class="sheet-shape" viewBox="0 0 60 15" preserveAspectRatio="none"><path d="M1 0l4 13q.5 1 2 1h47q1.500 0 2-1l3-13" fill="#e8e8e8" stroke="#333"/></svg><span class="sheet-name">Sheet1</span></span>
                        <span class="sheet"><svg class="sheet-shape" viewBox="0 0 60 15" preserveAspectRatio="none"><path d="M1 0l4 13q.5 1 2 1h47q1.500 0 2-1l3-13" fill="#e8e8e8" stroke="#333"/></svg><span class="sheet-name">Sheet2</span></span>
                    </div>
                </div>
            </section>
        </div>

        <section class="cmd">
            <div class="dock-head cmd-head">Okno poleceń<svg class="close-x" viewBox="0 0 10 10"><path d="M1 1l8 8M9 1L1 9" stroke="#111" stroke-width="1.600"/></svg></div>
            <div class="cmd-out">
                <div class="cmd-lines"><div>: '_LAYER</div><div>: '_LAYER</div></div>
                <div class="cmd-scroll"><span class="up"></span><span class="down"></span></div>
            </div>
            <div class="cmd-in">:</div>
        </section>
    </div>

    <aside class="side side-r">
        <span class="grip-h"></span>
        <span class="si"><svg><use href="#r-erase"/></svg></span>
        <span class="si"><svg><use href="#r-cx"/></svg></span>
        <span class="si"><svg><use href="#r-copy"/></svg></span>
        <span class="si"><svg><use href="#r-mirror"/></svg></span>
        <span class="si"><svg><use href="#r-move"/></svg></span>
        <span class="si"><svg><use href="#r-offset"/></svg></span>
        <span class="si"><svg><use href="#r-array"/></svg></span>
        <span class="si"><svg><use href="#r-rotate"/></svg></span>
        <span class="si"><svg><use href="#r-scale"/></svg></span>
        <span class="si"><svg><use href="#r-stretch"/></svg></span>
        <span class="si"><svg><use href="#r-len"/></svg></span>
        <span class="si"><svg><use href="#r-chamfer"/></svg></span>
        <span class="si"><svg><use href="#r-fillet"/></svg></span>
        <span class="si"><svg><use href="#r-shape1"/></svg></span>
        <span class="si"><svg><use href="#r-shape2"/></svg></span>
        <span class="si"><svg><use href="#r-join"/></svg></span>
        <span class="si"><svg><use href="#r-break"/></svg></span>
        <span class="si"><svg><use href="#r-trim"/></svg></span>
        <span class="si"><svg><use href="#r-ext"/></svg></span>
        <span class="si"><svg><use href="#r-dotcross"/></svg></span>
        <span class="si"><svg><use href="#r-handh"/></svg></span>
        <span class="si"><svg><use href="#r-order"/></svg></span>
        <span class="si"><svg><use href="#r-hands"/></svg></span>
        <span class="si"><svg><use href="#r-bomb"/></svg></span>
    </aside>
</div>

<div class="toolbar tb3">
    <span class="grip"></span>
    <span class="ti"><svg><use href="#b-clip"/></svg></span>
    <span class="ti"><svg><use href="#b-stamp"/></svg></span>
    <span class="ti"><svg><use href="#b-arrow"/></svg></span>
    <span class="ti"><svg><use href="#b-hand"/></svg></span>
    <span class="ti"><svg><use href="#b-save"/></svg></span>
</div>

<footer class="statusbar">
    <span class="status-msg">Zarządza warstwami i ich właściwościami:  LAYER</span>
    <span class="st st-snap on">Przyciąganie</span>
    <span class="st st-grid on">Siatka</span>
    <span class="st st-orto">Orto</span>
    <span class="st st-pol">Biegunowy</span>
    <span class="st st-esnap on">PrzyciąganieEL</span>
    <span class="st st-track on">ŚledzenieEL</span>
    <span class="st st-note">Komentarz<i class="tri"></i></span>
    <span class="st-text st-ratio">(1:1)</span>
    <span class="st-text">(224.15,297.638,0)</span>
</footer>

<div class="menu">
    <div class="mi active"><svg><use href="#layerhand"/></svg>Warstwa...</div>
    <div class="mi"><span class="mi-blank"></span>Narzędzia warstw<i class="sub"></i></div>
    <div class="msep"></div>
    <div class="mi"><svg><use href="#linestyle"/></svg>Styl linii...</div>
    <div class="mi"><svg><use href="#linecolor"/></svg>Kolor linii...</div>
    <div class="mi"><svg><use href="#linewidth"/></svg>Szerokość linii...</div>
    <div class="msep s8"></div>
    <div class="mi"><svg><use href="#dimstyle"/></svg>Styl wymiarowania...</div>
    <div class="mi"><svg><use href="#pointstyle"/></svg>Styl punktu...</div>
    <div class="mi"><svg><use href="#plotstyle"/></svg>Styl wydruku...</div>
    <div class="mi"><svg><use href="#richline"/></svg>Style linii wzbogaconej...</div>
    <div class="mi"><svg><use href="#scale"/></svg>Lista skali...</div>
    <div class="mi"><svg><use href="#tablestyle"/></svg>Styl tabeli...</div>
    <div class="mi"><svg><use href="#textstyle"/></svg>Styl tekstu...</div>
    <div class="msep s10"></div>
    <div class="mi"><span class="mi-blank"></span>Granice rysunku</div>
    <div class="mi"><svg><use href="#units"/></svg>System jednostek...</div>
    <div class="msep s8"></div>
    <div class="mi"><svg><use href="#rename"/></svg>Zmień nazwę...</div>
</div>

<svg class="arrows" width="1920" height="1040" fill="none" stroke-linejoin="miter">
    <path d="M256 48L225 36v7h-36v12h36v7z" stroke="#e01b24" stroke-width="4"/>
    <path d="M469 68l34-18v10h38v17h-38v9z" stroke="#e01b24" stroke-width="5"/>
    <path d="M41 100l40-20v11h50v20h-50v10z" stroke="#18a64a" stroke-width="5"/>
</svg>
</body>
</html>
```

FILE: styles.css
```css
* {
    box-sizing: border-box;
}
html, body {
    margin: 0;
    height: 1040px;
    overflow: hidden;
}
body {
    position: relative;
    display: flex;
    flex-direction: column;
    width: 1920px;
    background-color: #f0f0f0;
    color: #222;
    font-family: "Open Sans", "Noto Sans", sans-serif;
    font-size: 11.5px;
}
.defs {
    position: absolute;
}

/* title + menu */
.titlebar {
    display: flex;
    height: 54px;
    flex: none;
    background: linear-gradient(#f1f2f4, #e6e7eb);
    border-bottom: 1px solid #a0a0a0;
}
.logo {
    position: relative;
    flex: none;
    width: 38px;
    height: 38px;
    margin: 8px 6px 0 3px;
    border-radius: 50%;
    background: radial-gradient(circle at 50% 35%, #6a6a6a 0, #333 55%, #111 100%);
    border: 1px solid #555;
}
.logo-cone {
    position: absolute;
    left: -1px;
    top: -1px;
    width: 38px;
    height: 38px;
}
.logo-d {
    position: absolute;
    left: 8px;
    top: 4px;
    color: #a8d038;
    font: bold 23px "Liberation Serif", serif;
}
.title-main {
    flex: 1;
    min-width: 0;
}
.title-row {
    display: flex;
    align-items: center;
    height: 28px;
}
.qa {
    width: 18px;
    height: 18px;
    margin-left: 5px;
    flex: none;
}
.qa-more {
    width: 6px;
    height: 6px;
    margin-left: 7px;
    border-top: 1px solid #334;
    border-bottom: 3px solid #334;
}
.app-title {
    margin-left: 481px;
    color: #333;
    font-size: 14.5px;
    white-space: nowrap;
}
.win-btns {
    display: flex;
    gap: 7px;
    margin-left: auto;
    align-items: center;
}
.win-ic {
    width: 12px;
    height: 12px;
}
.title-row .win-btns {
    gap: 23px;
    margin-right: 13px;
}
.win-inner {
    margin-right: 3px;
}
.menu-row {
    display: flex;
    align-items: stretch;
    height: 25px;
}
.menubar {
    display: flex;
    align-items: center;
    height: 20px;
    margin-top: 5px;
}
.mb {
    font-size: 11.5px;
    white-space: nowrap;
}
.mb-plik { margin-left: 6px; width: 36px; }
.mb-edycja { width: 50px; }
.mb-widok { width: 52px; }
.mb-wst { width: 70px; }
.mb-format {
    width: 54px;
    height: 20px;
    line-height: 20px;
    text-align: center;
    background-color: #3f97e9;
    color: #fff;
}
.mb-wym { margin-left: 8px; width: 65px; }
.mb-rys { width: 74px; }
.mb-mod { width: 82px; }
.mb-tool { width: 57px; }
.mb-nar { width: 69px; }
.mb-okna { width: 45px; }

/* toolbars */
.toolbar {
    display: flex;
    align-items: center;
    flex: none;
    border-bottom: 1px solid #a8a8a8;
}
.tb1 {
    height: 30px;
}
.tb2 {
    height: 30px;
}
.tb3 {
    height: 35px;
    padding-bottom: 6px;
    border-bottom: none;
}
.grip {
    flex: none;
    width: 3px;
    height: 22px;
    margin: 0 4px 0 4px;
    background-image: linear-gradient(#aaa 50%, transparent 50%);
    background-size: 2px 3px;
    background-repeat: repeat-y;
}
.grip-mid {
    margin: 0 4px 0 5px;
}
.grip-mid2 {
    margin: 0 4px 0 6px;
}
.ti {
    display: flex;
    align-items: center;
    justify-content: center;
    flex: none;
    width: 26.5px;
}
.ti-wide {
    width: 27.2px;
}
.ti svg {
    width: 20px;
    height: 20px;
}
.sep {
    flex: none;
    width: 1px;
    height: 22px;
    margin: 0 3px;
    background-color: #a8a8a8;
}
.gap {
    flex: none;
    width: 7px;
}
.under-menu {
    flex: none;
    width: 220px;
}
.tb3 .ti svg {
    width: 17px;
    height: 17px;
}
.tb3 .grip {
    margin-right: 3px;
}
.tb2 .ti {
    width: 27px;
}
.tb2 > .grip:first-child {
    margin-right: 2px;
}
.grip-after {
    margin: 0 3px 0 6px;
}
.grip-after2 {
    margin: 0 3px 0 6px;
}

/* combos */
.combo {
    display: flex;
    flex: none;
    height: 20px;
    background-color: #fff;
    border: 1px solid #a0a0a0;
    font-family: Roboto, sans-serif;
    font-size: 11px;
}
.combo-val {
    flex: 1;
    min-width: 0;
    padding-left: 3px;
    line-height: 18px;
    white-space: nowrap;
    overflow: hidden;
}
.drop {
    position: relative;
    flex: none;
    width: 16px;
    background-color: #dcdcdc;
    border-left: 1px solid #a0a0a0;
}
.drop::after {
    content: "";
    position: absolute;
    left: 4px;
    top: 3px;
    width: 6px;
    height: 6px;
    border-right: 2px solid #555;
    border-bottom: 2px solid #555;
    transform: rotate(45deg) scale(.8);
}
.style-combo {
    width: 158px;
    height: 18px;
    margin-right: -2px;
    font-size: 11.5px;
}
.style-combo .combo-val {
    padding-left: 2px;
    line-height: 16px;
}
.layer-combo {
    width: 456px;
}
.layer-val {
    display: flex;
    align-items: center;
    padding-left: 2px;
}
.lay-ic {
    width: 20px;
    height: 16px;
    flex: none;
}
.ring {
    flex: none;
    width: 13px;
    height: 13px;
    margin: 0 6px 0 4px;
    border: 1px solid #111;
    border-radius: 50%;
    background-color: #fff;
}
.ring.small {
    display: inline-block;
    width: 11px;
    height: 11px;
    margin: 0 5px 0 5px;
    vertical-align: -2px;
}
.type-combo {
    width: 115px;
    margin-left: 6px;
}
.type-combo .combo-val {
    padding-left: 1px;
}
.width-combo {
    width: 117px;
    margin-left: 9px;
}
.pad-solid {
    margin-left: 15px;
}
.dash {
    display: inline-block;
    width: 33px;
    height: 1px;
    margin: 0 2px 3px 3px;
    vertical-align: middle;
    background-color: #111;
}

/* workspace */
.workspace {
    display: flex;
    flex: none;
    height: 866px;
}
.side {
    display: flex;
    flex-direction: column;
    align-items: center;
    flex: none;
    width: 31px;
    border-right: 1px solid #a0a0a0;
    padding-top: 2px;
}
.side-r {
    width: 32px;
    border-right: none;
}
.grip-h {
    flex: none;
    width: 24px;
    height: 3px;
    margin-bottom: 4px;
    background-image: linear-gradient(90deg, #bbb 50%, transparent 50%);
    background-size: 3px 2px;
    background-repeat: repeat-x;
}
.si {
    display: flex;
    align-items: center;
    justify-content: center;
    flex: none;
    height: 26px;
}
.si svg {
    width: 20px;
    height: 20px;
}
.hr {
    flex: none;
    width: 23px;
    height: 1px;
    margin: 3px 0 2.5px;
    background-color: #a8a8a8;
}
.side-a .si:first-of-type,
.side-b .si:first-of-type,
.side-r .si:first-of-type {
    margin-top: 5px;
}
.center {
    display: flex;
    flex-direction: column;
    flex: none;
    width: 1826px;
}
.upper {
    display: flex;
    flex: none;
    height: 797px;
}

/* dock headers */
.dock-head {
    position: relative;
    flex: none;
    height: 21px;
    margin: 0;
    padding-left: 3px;
    background-color: #e0e4fb;
    border: 1px solid #a8a8b8;
    color: #111;
    font-family: "Noto Sans", sans-serif;
    font-size: 11.5px;
    font-weight: bold;
    line-height: 19px;
}
.close-x {
    position: absolute;
    right: 6px;
    top: 5px;
    width: 10px;
    height: 10px;
}

/* left panel */
.panel {
    display: flex;
    flex-direction: column;
    flex: none;
    width: 250px;
    padding-top: 1px;
    font-family: Roboto, sans-serif;
    font-size: 11px;
}
.opt-msg {
    flex: none;
    height: 29px;
    margin: 0;
    padding-left: 9px;
    line-height: 27px;
}
.sel-combo {
    flex: none;
    height: 20px;
    margin: 12px 0 0 11px;
    padding-left: 2px;
    background-color: #fff;
    border: 1px solid #a8a8a8;
    line-height: 18px;
}
.sel-btns {
    display: flex;
    flex: none;
    gap: 9px;
    height: 20px;
    margin: 7px 0 0 12px;
}
.btn-ic {
    display: flex;
    align-items: center;
    justify-content: center;
    width: 20px;
    height: 20px;
    background-color: #e4e4e4;
    border: 1px solid #b5b5b5;
}
.btn-ic svg {
    width: 16px;
    height: 16px;
}
.prop-box {
    flex: none;
    width: 225px;
    height: 644px;
    margin: 7px 0 0 11px;
    padding: 7px 26px 0 10px;
    border: 1px solid #a0a0a0;
}
.sec-head {
    position: relative;
    height: 19px;
    margin-top: 2px;
    padding-left: 4px;
    background-color: #e0e4fb;
    border: 1px solid #fff;
    outline: 1px solid #b0b0c0;
    outline-offset: -1px;
    color: #111;
    font-family: "Noto Sans", sans-serif;
    font-size: 11.5px;
    font-weight: bold;
    line-height: 17px;
}
.sec-head::after {
    content: "";
    position: absolute;
    right: 5px;
    top: 6px;
    border-left: 5px solid transparent;
    border-right: 5px solid transparent;
    border-bottom: 5px solid #111;
}
.prop {
    display: flex;
    align-items: center;
    height: 20px;
    background-color: #ececec;
}
.sec-head + .prop {
    margin-top: 3px;
}
.prop svg {
    flex: none;
    width: 18px;
    height: 18px;
    margin: 0 11px;
}
.field {
    position: relative;
    flex: 1;
    height: 20px;
    min-width: 0;
    padding-left: 2px;
    background-color: #fff;
    border: 1px solid #aaa;
    line-height: 18px;
    white-space: nowrap;
    overflow: hidden;
}
.field.ro {
    background-color: #abcbe9;
    padding-left: 3px;
}
.drop-f {
    padding-right: 17px;
}
.drop-f::after {
    content: "";
    position: absolute;
    top: 0;
    right: 0;
    bottom: 0;
    width: 16px;
    background-color: #dcdcdc;
    border-left: 1px solid #aaa;
}
.drop-f::before {
    content: "";
    position: absolute;
    z-index: 1;
    right: 5px;
    top: 4px;
    width: 5px;
    height: 5px;
    border-right: 2px solid #666;
    border-bottom: 2px solid #666;
    transform: rotate(45deg);
}
.drop-f.off::before {
    border-color: #bbb;
}
.drop-f.off {
    background-color: #f0f0f0;
}
.ctr {
    position: relative;
    flex: none;
    width: 14px;
    height: 14px;
    margin: 0 13px;
    border: 1px solid #333;
    border-right-color: transparent;
    border-radius: 50%;
    font-size: 9px;
    font-weight: bold;
    line-height: 14px;
    text-indent: 11px;
}
.ctr::before {
    content: "";
    position: absolute;
    left: 3px;
    top: 3px;
    width: 6px;
    height: 6px;
    border: 1px solid #555;
    border-radius: 50%;
    background-color: #e8bf2c;
}
.big-a {
    flex: none;
    width: 40px;
    color: #3b78c2;
    font: bold 21px "Liberation Sans", sans-serif;
    line-height: 20px;
    text-align: center;
}

/* document area */
.doc {
    display: flex;
    flex-direction: column;
    flex: none;
    width: 1576px;
    border-left: 1px solid #a0a0a0;
    padding-top: 1px;
}
.doc-head {
    height: 21px;
    border-left: none;
}
.doc-help {
    display: flex;
    align-items: center;
    justify-content: flex-end;
    flex: none;
    height: 28px;
    padding-right: 6px;
    background-color: #f0f0f5;
}
.doc-help svg {
    width: 14px;
    height: 14px;
}
.doc-tabs {
    display: flex;
    align-items: center;
    flex: none;
    height: 24px;
    padding-left: 164px;
    background-color: #eeeef3;
    border-top: 1px solid #a0a0a8;
    border-bottom: 1px solid #a0a0a8;
    border-right: 2px solid #8a8a8a;
}
.tab-x {
    width: 35px;
    color: #333;
    font: bold 17px "DejaVu Sans", sans-serif;
    text-align: center;
}
.tab-plus {
    width: 27px;
    height: 22px;
    background-color: #e4e4e8;
    border-right: 1px solid #a0a0a8;
    border-left: 1px solid #c8c8c8;
    color: #444;
    font: 24px/20px "Liberation Sans", sans-serif;
    text-align: center;
}
.canvas {
    position: relative;
    flex: 1;
    margin-top: 4px;
    background-color: #fff;
    border-top: 2px solid #8a8a8a;
}
.drawing {
    position: absolute;
    left: 0;
    top: 0;
}
.sheet-tabs {
    position: absolute;
    left: 1px;
    bottom: 3px;
    display: flex;
    gap: 0;
    height: 15px;
}
.sheet {
    position: relative;
    width: 58px;
    height: 15px;
    font-size: 10.5px;
    line-height: 14px;
    text-align: center;
}
.sheet-model {
    width: 47px;
    margin-right: 3px;
}
.sheet-shape {
    position: absolute;
    left: 0;
    top: 0;
    width: 100%;
    height: 100%;
}
.sheet-name {
    position: relative;
}

/* command window */
.cmd {
    flex: 1;
    display: flex;
    flex-direction: column;
    border-top: 2px solid #8a8a8a;
    background-color: #fff;
}
.cmd-head {
    height: 22px;
    font-size: 11.5px;
    line-height: 20px;
    border-right: none;
}
.cmd-out {
    position: relative;
    flex: none;
    height: 28px;
    overflow: hidden;
    border-top: 1px solid #8a8a8a;
    border-bottom: 1px solid #a0a0a0;
}
.cmd-lines {
    position: absolute;
    left: 5px;
    bottom: 3px;
    font: 14px/18px "Liberation Sans", sans-serif;
    color: #333;
}
.cmd-scroll {
    position: absolute;
    right: 5px;
    top: 5px;
    display: flex;
    flex-direction: column;
    gap: 5px;
}
.up, .down {
    width: 7px;
    height: 7px;
    border-left: 2px solid #555;
    border-top: 2px solid #555;
    transform: rotate(45deg);
}
.down {
    transform: rotate(225deg);
}
.cmd-in {
    flex: 1;
    padding: 1px 0 0 6px;
    font: 13px/14px "Liberation Sans", sans-serif;
}

/* status bar */
.statusbar {
    display: flex;
    align-items: center;
    flex: none;
    height: 25px;
    padding-bottom: 5px;
}
.status-msg {
    flex: none;
    width: 682px;
    padding-left: 2px;
    font-size: 11.3px;
    white-space: pre;
}
.st {
    flex: none;
    height: 18px;
    background-color: #e8e8e8;
    border: 1px solid #a8a8a8;
    line-height: 16px;
    text-align: center;
    white-space: nowrap;
}
.st.on {
    background-color: #cfe3f6;
    border-color: #5a9bd6;
}
.st-snap { width: 77px; margin-right: 8px; }
.st-grid { width: 42px; margin-right: 8px; }
.st-orto { width: 34px; margin-right: 11px; }
.st-pol { width: 70px; margin-right: 8px; }
.st-esnap { width: 83px; margin-right: 14px; }
.st-track { width: 72px; margin-right: 10px; }
.st-note {
    position: relative;
    width: 91px;
    padding-left: 4px;
    text-align: left;
    background-color: #e4e4e4;
}
.tri {
    position: absolute;
    right: 8px;
    top: 6px;
    border-left: 4px solid transparent;
    border-right: 4px solid transparent;
    border-top: 5px solid #111;
}
.st-text {
    margin-left: 7px;
    white-space: nowrap;
}
.st-ratio {
    margin-left: 8px;
}

/* Format menu */
.menu {
    position: absolute;
    left: 262px;
    top: 54px;
    width: 199px;
    height: 374px;
    padding: 4px 2px;
    background-color: #f0f0f0;
    border: 1px solid #a0a0a0;
    box-shadow: 2px 2px 3px rgba(0, 0, 0, .35);
}
.mi {
    position: relative;
    display: flex;
    align-items: center;
    height: 22px;
    padding-bottom: 2px;
    font-size: 11.5px;
    white-space: nowrap;
    color: #333;
}
.mi svg {
    flex: none;
    width: 18px;
    height: 18px;
    margin: 0 8px 0 1px;
}
.mi-blank {
    flex: none;
    width: 27px;
}
.mi.active {
    background-color: #3f97e9;
    color: #fff;
}
.sub {
    position: absolute;
    right: 5px;
    top: 7px;
    border-top: 4px solid transparent;
    border-bottom: 4px solid transparent;
    border-left: 4px solid #111;
}
.msep {
    height: 1px;
    margin: 2px 4px 6px;
    background-color: #d0d0d0;
}
.msep.s8 {
    margin-bottom: 5px;
}
.msep.s10 {
    margin-bottom: 7px;
}

.arrows {
    position: absolute;
    left: 0;
    top: 0;
    pointer-events: none;
}
```
